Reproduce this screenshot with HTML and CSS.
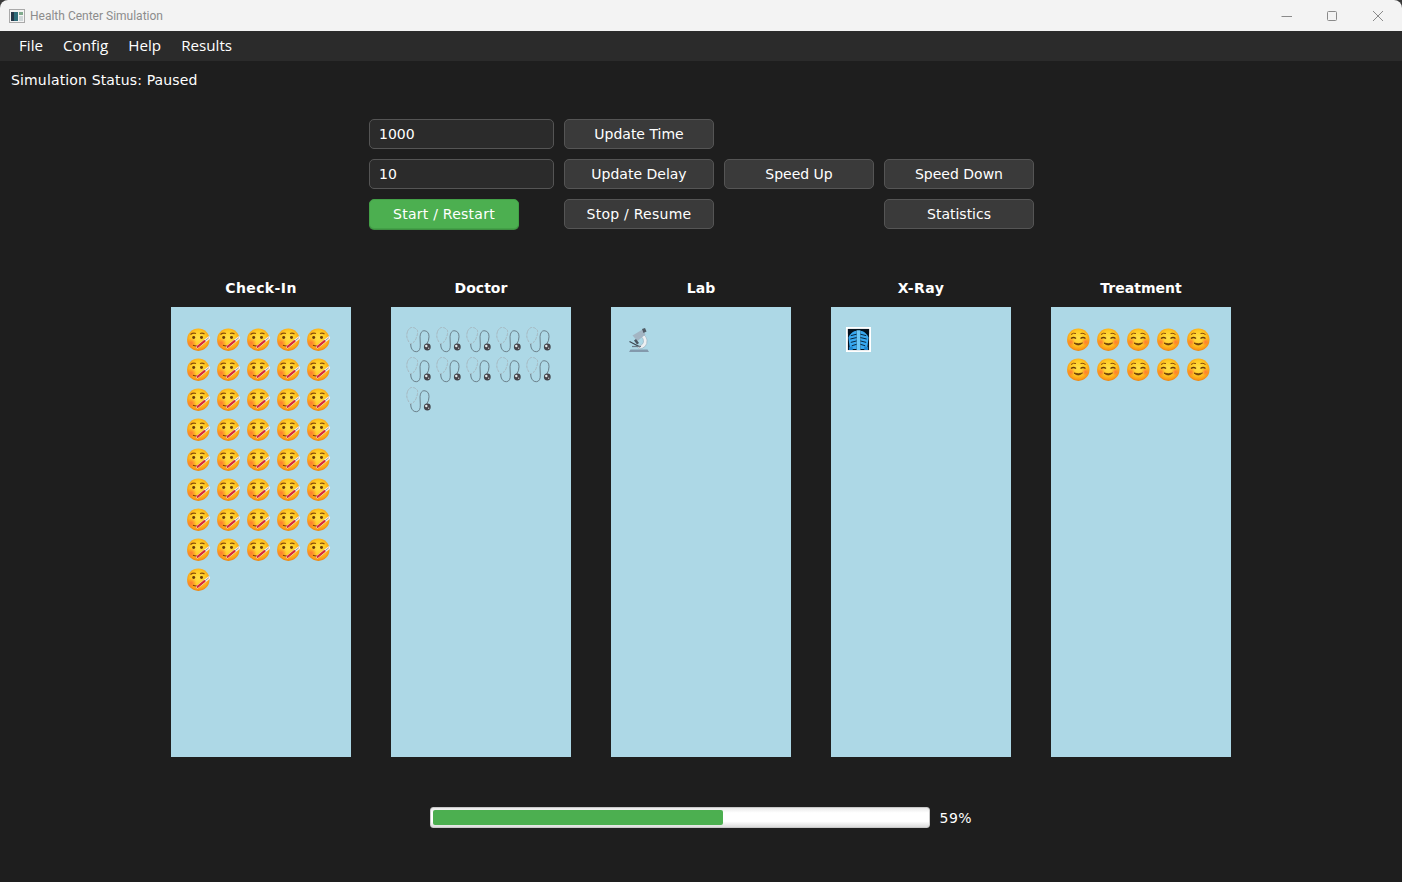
FILE: index.html
```html
<!DOCTYPE html>
<html lang="en">
  <head>
    <meta charset="UTF-8" />
    <meta name="viewport" content="width=device-width, initial-scale=1" />
    <title>Health Center Simulation</title>
    <link rel="stylesheet" href="styles.css">
  </head>
  <body>
    <svg class="defs" width="0" height="0">
      <defs>
        <radialGradient id="face" cx="0.5" cy="0.42" r="0.58">
          <stop offset="0" stop-color="#ffe04a" />
          <stop offset="0.55" stop-color="#ffcb24" />
          <stop offset="0.85" stop-color="#fb9f18" />
          <stop offset="1" stop-color="#ec8410" />
        </radialGradient>
        <radialGradient id="blush" cx="0.5" cy="0.5" r="0.5">
          <stop offset="0" stop-color="#ff6a35" stop-opacity="0.8" />
          <stop offset="1" stop-color="#ff6a35" stop-opacity="0" />
        </radialGradient>
        <symbol id="sick" viewBox="0 0 24 24">
          <circle cx="12.300" cy="11.700" r="11.200" fill="url(#face)" />
          <circle cx="5.500" cy="15" r="5" fill="url(#blush)" />
          <path d="M4.500 6.500 Q7 4.500 10 5.500 M14 5.500 Q16.500 4.500 18.500 6" fill="none" stroke="#8a4b08" stroke-width="1.100" />
          <ellipse cx="7.700" cy="9.500" rx="1.500" ry="1.400" fill="#6b3a06" />
          <ellipse cx="15.500" cy="9.500" rx="1.500" ry="1.400" fill="#6b3a06" />
          <path d="M7 17.300 Q9.500 18.500 12 17.800" fill="none" stroke="#7a3b06" stroke-width="1.100" />
          <path d="M11.500 18.800 L22.800 9.800" stroke="#f7ece8" stroke-width="3" stroke-linecap="round" />
          <path d="M11.500 18.800 L18.500 13.200" stroke="#d92c34" stroke-width="2.200" stroke-linecap="round" />
          <path d="M19.500 12.400 L22.500 10" stroke="#8f9ea8" stroke-width="1" stroke-linecap="round" />
        </symbol>
        <symbol id="calm" viewBox="0 0 24 24">
          <circle cx="12.300" cy="11.700" r="11.200" fill="url(#face)" />
          <circle cx="5" cy="14" r="4" fill="url(#blush)" />
          <circle cx="19.500" cy="14" r="4" fill="url(#blush)" />
          <path d="M5 6.500 Q7.500 4.500 10 5.500 M14.500 5.500 Q17 4.500 19.500 6.500" fill="none" stroke="#8a4b08" stroke-width="1" />
          <path d="M5 10.500 Q7.500 8.500 10 10.500 M14.500 10.500 Q17 8.500 19.500 10.500" fill="none" stroke="#6b3a06" stroke-width="1.300" />
          <path d="M8 15 Q12.300 19 16.500 15 Q12.300 16.500 8 15 Z" fill="#6b3a06" stroke="#6b3a06" stroke-width="0.800" />
        </symbol>
        <symbol id="stethoscope" viewBox="0 0 26 26">
          <path d="M1.500 4.500 Q0 9 1.500 12 Q3 16 4.700 17 Q9.500 15 10.500 10 Q12 7 11.500 3.500 Q9 0 5.500 0.500 Q3 1 1.500 4.500" fill="none" stroke="#a4b0b6" stroke-width="0.800" stroke-dasharray="3 1" />
          <path d="M4.700 17 L5 20 Q6.500 25 10.700 24.700 Q14.500 24 14.300 18 L14 9.700 Q14.500 4 18 3.700 Q23 4 23 9.700 Q23 14 20.700 17" fill="none" stroke="#5a6a73" stroke-width="0.800" />
          <circle cx="21.300" cy="20" r="3.400" fill="#43434a" />
          <circle cx="20.300" cy="19" r="1.200" fill="#e3e7ea" />
          <circle cx="22.700" cy="21.300" r="0.700" fill="#c9ced2" />
        </symbol>
        <symbol id="microscope" viewBox="0 0 24 24">
          <path d="M3 24 L4.500 21.500 L21.500 21.500 L23 24 Z" fill="#8399ac" />
          <path d="M13 21 Q21.500 20 21 12 Q20.500 8.500 17 6 L15 8.500 Q18 10.500 17.500 14 Q16.500 18 11 18 Z" fill="#edf0f2" stroke="#8ba0b1" stroke-width="0.500" />
          <path d="M6.500 7.500 L16.500 1.500 L19.500 6.500 L11.500 13 Z" fill="#a3b5c3" />
          <path d="M16 1 L19 0 L20.500 3.500 L17.500 5 Z" fill="#4f5a64" />
          <path d="M10 11 L13 15 L11 16.500 L8 12.500 Z" fill="#4a5560" />
          <path d="M3.500 13.500 L14 19" stroke="#3c4650" stroke-width="1.300" />
          <path d="M6 18.500 H15" stroke="#6b7a87" stroke-width="1.200" />
        </symbol>
        <symbol id="xray" viewBox="0 0 26 26">
          <rect width="26" height="26" fill="#fff" />
          <rect x="2" y="2" width="22" height="22" fill="#04121f" />
          <path d="M2.500 11 Q6 4 11 4 L11 23 L4 23 Z M23.500 11 Q20 4 15 4 L15 23 L22 23 Z" fill="#38a8f0" />
          <path d="M11 2 H15 V24 H11 Z" fill="#6cc8f8" />
          <path d="M5 9 L11 7.500 M21 9 L15 7.500 M4.500 12.500 L11 11 M21.500 12.500 L15 11 M5 16 L11 14.500 M21 16 L15 14.500 M6 19.500 L11 18 M20 19.500 L15 18" fill="none" stroke="#06233a" stroke-width="1" />
          <path d="M2 7 L8 3.500 H18 L24 7 V2 H2 Z" fill="#04121f" />
          <path d="M3 21 L7 20 V24 H3 Z M23 21 L19 20 V24 H23 Z" fill="#1f86cf" />
        </symbol>
      </defs>
    </svg>

    <div class="window">
      <header class="titlebar">
        <svg class="app-icon" width="16" height="16" viewBox="0 0 16 16">
          <rect x="0.500" y="1.500" width="15" height="13" fill="#f4f4f4" stroke="#a9a9a9" />
          <rect x="2" y="4" width="7" height="9" fill="#2f6d7a" />
          <rect x="2" y="4" width="3" height="9" fill="#26384a" />
          <rect x="10" y="4" width="4" height="3" fill="#7fa98c" />
          <rect x="10" y="8" width="4" height="5" fill="#cfd6d8" />
        </svg>
        <span class="window-title">Health Center Simulation</span>
        <div class="window-buttons">
          <svg width="46" height="30" viewBox="0 0 46 30"><path d="M17.500 15.500 H28" stroke="#8a8a8a" /></svg>
          <svg width="46" height="30" viewBox="0 0 46 30"><rect x="17.500" y="10.500" width="9" height="9" rx="1" fill="none" stroke="#8a8a8a" /></svg>
          <svg width="46" height="30" viewBox="0 0 46 30"><path d="M17 10 L27 20 M27 10 L17 20" stroke="#8a8a8a" /></svg>
        </div>
      </header>

      <nav class="menubar">
        <span>File</span>
        <span>Config</span>
        <span>Help</span>
        <span>Results</span>
      </nav>

      <main class="content">
        <div class="status">Simulation Status: Paused</div>

        <div class="controls">
          <input class="field" type="text" value="1000" />
          <button class="btn">Update Time</button>
          <span></span>
          <span></span>

          <input class="field" type="text" value="10" />
          <button class="btn">Update Delay</button>
          <button class="btn">Speed Up</button>
          <button class="btn">Speed Down</button>

          <button class="btn btn-start btn-spaced">Start / Restart</button>
          <button class="btn btn-spaced">Stop / Resume</button>
          <span></span>
          <button class="btn">Statistics</button>
        </div>

        <div class="stations">
          <section class="station">
            <h2 class="title-hyphen">Check-In</h2>
            <div class="panel" data-icon="sick" data-count="41"></div>
          </section>
          <section class="station">
            <h2>Doctor</h2>
            <div class="panel" data-icon="stethoscope" data-count="11"></div>
          </section>
          <section class="station">
            <h2>Lab</h2>
            <div class="panel" data-icon="microscope" data-count="1"></div>
          </section>
          <section class="station">
            <h2 class="title-hyphen">X-Ray</h2>
            <div class="panel" data-icon="xray" data-count="1"></div>
          </section>
          <section class="station">
            <h2>Treatment</h2>
            <div class="panel" data-icon="calm" data-count="10"></div>
          </section>
        </div>

        <div class="progress-row">
          <div class="progress">
            <div class="progress-fill" style="width: 58.800%"></div>
          </div>
          <span class="progress-label">59%</span>
        </div>
      </main>
    </div>

    <script src="script.js"></script>
  </body>
</html>
```

FILE: styles.css
```css
html,
body {
  margin: 0;
  height: 100%;
}
body {
  background: #3a3a3a;
  overflow: hidden;
}
.defs {
  position: absolute;
}
.window {
  height: 882px;
  display: flex;
  flex-direction: column;
  background: #1e1e1e;
  border-radius: 8px 8px 0 0;
  overflow: hidden;
  color: #fff;
  font-family: "DejaVu Sans", sans-serif;
  font-size: 14px;
}
.titlebar {
  height: 31px;
  flex: none;
  display: flex;
  align-items: center;
  background: #f3f3f3;
  padding-left: 9px;
}
.app-icon {
  margin-right: 5px;
}
.window-title {
  font-family: Roboto, sans-serif;
  font-size: 12px;
  color: #8c8c8c;
}
.window-buttons {
  margin-left: auto;
  display: flex;
}
.menubar {
  height: 30px;
  flex: none;
  display: flex;
  align-items: center;
  gap: 20px;
  padding: 0 0 2px 19px;
  box-sizing: border-box;
  background: #2b2b2b;
  font-family: "Open Sans", sans-serif;
  font-size: 15.200px;
}
.content {
  flex: 1;
  display: flex;
  flex-direction: column;
  align-items: center;
}
.status {
  align-self: flex-start;
  margin: 11px 0 0 11px;
  line-height: 17px;
  letter-spacing: 0.150px;
}
.controls {
  display: grid;
  grid-template-columns: 185px 150px 150px 150px;
  grid-auto-rows: 30px;
  gap: 10px;
  margin-top: 30px;
  margin-left: 1px;
}
.field {
  box-sizing: border-box;
  width: 100%;
  height: 30px;
  padding: 0 9px;
  background: #2b2b2b;
  border: 1px solid #555;
  border-radius: 5px;
  color: #fff;
  font: inherit;
}
.btn {
  box-sizing: border-box;
  width: 150px;
  height: 30px;
  padding: 0;
  background: #3a3a3a;
  border: 1px solid #555;
  border-radius: 5px;
  color: #fff;
  font: inherit;
}
.btn-spaced {
  letter-spacing: 0.250px;
}
.btn-start {
  background: #4caf50;
  border-color: #43a047;
  box-shadow: 0 1px 0 #3e8e41;
}
.stations {
  display: flex;
  gap: 40px;
  margin-top: 50px;
}
.station {
  width: 180px;
}
.station h2 {
  margin: 0;
  height: 18px;
  line-height: 18px;
  margin-bottom: 10px;
  font-size: 14px;
  text-align: center;
}
.station h2.title-hyphen {
  letter-spacing: 0.400px;
}
.panel {
  box-sizing: border-box;
  height: 450px;
  padding: 21px 15px;
  background: #add8e6;
  display: grid;
  grid-template-columns: repeat(5, 24px);
  grid-auto-rows: 24px;
  align-content: start;
  gap: 6px;
}
.panel svg {
  width: 24px;
  height: 24px;
  display: block;
}
.panel svg.stethoscope {
  width: 26px;
  height: 26px;
  margin-top: -1px;
}
.panel svg.xray {
  width: 25px;
  height: 25px;
  margin-top: -1px;
}
.progress-row {
  display: flex;
  align-items: center;
  gap: 10px;
  margin-top: 50px;
}
.progress {
  box-sizing: border-box;
  width: 500px;
  height: 21px;
  padding: 2px;
  background: linear-gradient(#e9e9e9, #fff 25%, #fff 70%, #dcdcdc);
  border: 1px solid #c8c8c8;
  border-radius: 3px;
}
.progress-fill {
  height: 100%;
  background: #4caf50;
  border-radius: 2px;
}
.progress-label {
  width: 33px;
  letter-spacing: 0.500px;
}
```

FILE: script.js
```js
// fill each station panel with its icons
document.querySelectorAll(".panel").forEach((panel) => {
  const icon = panel.dataset.icon;
  const count = Number(panel.dataset.count);
  for (let i = 0; i < count; i++) {
    const svg = document.createElementNS("http://www.w3.org/2000/svg", "svg");
    const use = document.createElementNS("http://www.w3.org/2000/svg", "use");
    use.setAttribute("href", "#" + icon);
    svg.appendChild(use);
    svg.classList.add(icon);
    panel.appendChild(svg);
  }
});
```
